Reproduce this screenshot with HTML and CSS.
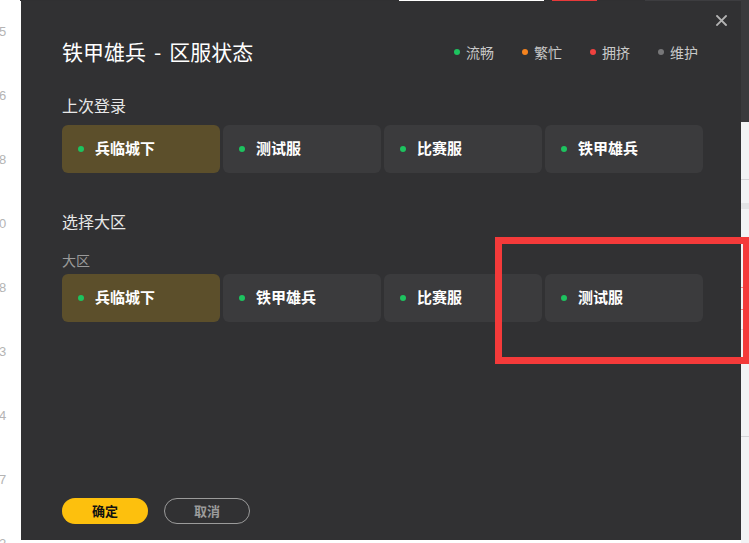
FILE: index.html
```html
<!DOCTYPE html>
<html lang="zh-CN">
<head>
<meta charset="utf-8">
<title>铁甲雄兵 - 区服状态</title>
<link rel="stylesheet" href="styles.css">
</head>
<body>
<div class="page">
  <div class="gutter">
    <span>5</span><span>6</span><span>8</span><span>0</span><span>8</span><span>3</span><span>4</span><span>7</span><span>2</span>
  </div>
  <div class="backdrop">
    <div class="topbar">
      <span class="seg seg-dark seg-w1"></span>
      <span class="seg seg-white seg-w2"></span>
      <span class="seg seg-dark seg-w3"></span>
      <span class="seg seg-red seg-w4"></span>
      <span class="seg seg-dark seg-w5"></span>
      <span class="seg seg-grey seg-fill"></span>
    </div>
  </div>
  <div class="side">
    <span class="side-dark"></span>
    <span class="side-light side-h1"></span>
    <span class="side-line"></span>
    <span class="side-light side-h2"></span>
    <span class="side-band"></span>
    <span class="side-light side-h3"></span>
    <span class="side-red"></span>
    <span class="side-light side-h4"></span>
    <span class="side-red"></span>
    <span class="side-light side-h5"></span>
    <span class="side-line"></span>
    <span class="side-light side-h6"></span>
    <span class="side-line"></span>
    <span class="side-light side-fill"></span>
  </div>
</div>

<div class="modal">
  <button class="close" aria-label="关闭">
    <svg width="11" height="11" viewBox="0 0 11 11"><path d="M1 1L10 10M10 1L1 10" stroke="#b4b4b4" stroke-width="1.8" stroke-linecap="square"/></svg>
  </button>
  <header class="modal-head">
    <h1>铁甲雄兵<span class="dash">-</span>区服状态</h1>
    <ul class="legend">
      <li><i class="dot dot-green"></i>流畅</li>
      <li><i class="dot dot-orange"></i>繁忙</li>
      <li><i class="dot dot-red"></i>拥挤</li>
      <li><i class="dot dot-grey"></i>维护</li>
    </ul>
  </header>

  <section class="group group-last">
    <h2>上次登录</h2>
    <div class="servers">
      <div class="server is-active"><i class="dot dot-green"></i>兵临城下</div>
      <div class="server"><i class="dot dot-green"></i>测试服</div>
      <div class="server"><i class="dot dot-green"></i>比赛服</div>
      <div class="server"><i class="dot dot-green"></i>铁甲雄兵</div>
    </div>
  </section>

  <section class="group group-region">
    <h2>选择大区</h2>
    <h3>大区</h3>
    <div class="servers">
      <div class="server is-active"><i class="dot dot-green"></i>兵临城下</div>
      <div class="server"><i class="dot dot-green"></i>铁甲雄兵</div>
      <div class="server"><i class="dot dot-green"></i>比赛服</div>
      <div class="server"><i class="dot dot-green"></i>测试服</div>
    </div>
  </section>

  <footer class="modal-foot">
    <button class="btn btn-primary">确定</button>
    <button class="btn btn-ghost">取消</button>
  </footer>
</div>

<div class="annotation"></div>
</body>
</html>
```

FILE: styles.css
```css
* { box-sizing: border-box; margin: 0; padding: 0; }

html, body {
  width: 749px;
  height: 543px;
  overflow: hidden;
}

body {
  background: #ffffff;
  font-family: "Noto Sans CJK SC", "Noto Sans", sans-serif;
  position: relative;
}

/* ---------- underlying page ---------- */
.page {
  display: flex;
  height: 543px;
  overflow: hidden;
}

.gutter {
  width: 21px;
  height: 543px;
  overflow: hidden;
  display: flex;
  flex-direction: column;
  font-family: "Liberation Sans", Arial, sans-serif;
  font-size: 13px;
  line-height: 64px;
  color: #b4b4b4;
  margin-left: -1px;
}
.gutter span { flex: none; height: 64px; }
.gutter span:last-child { height: 31px; line-height: 64px; }

.backdrop {
  flex: 1;
  background: #ffffff;
}

.topbar {
  display: flex;
  height: 1px;
}
.seg { display: block; height: 1px; }
.seg-dark { background: #303032; }
.seg-white { background: #ffffff; }
.seg-red { background: #e8393a; }
.seg-grey { background: #3d3d40; }
.seg-w1 { width: 379px; }
.seg-w2 { width: 145px; }
.seg-w3 { width: 8px; }
.seg-w4 { width: 45px; }
.seg-w5 { width: 48px; }
.seg-fill { flex: 1; }

.side {
  width: 8px;
  display: flex;
  flex-direction: column;
}
.side > span { display: block; }
.side-dark { height: 122px; background: #3a3a3d; }
.side-light { background: #f2f3f5; }
.side-h1 { height: 57px; }
.side-h2 { height: 23px; }
.side-h3 { height: 78px; }
.side-h4 { height: 21px; }
.side-h5 { height: 19px; }
.side-h6 { height: 106px; }
.side-fill { flex: 1; }
.side-line { height: 1px; background: #d4d5d8; }
.side-band { height: 6px; background: #e3e4e6; }
.side-red { height: 1px; background: #f08a8a; }

/* ---------- modal ---------- */
.modal {
  position: absolute;
  left: 21px;
  top: 1px;
  width: 720px;
  height: 539px;
  background: #313133;
  padding: 37px 38px 16px 41px;
  display: flex;
  flex-direction: column;
}

.close {
  position: absolute;
  top: 14px;
  right: 14px;
  width: 11px;
  height: 11px;
  border: 0;
  background: transparent;
  display: flex;
}

.modal-head {
  height: 28px;
  display: flex;
  align-items: center;
  justify-content: space-between;
}

.modal-head h1 {
  font-size: 21px;
  font-weight: 400;
  color: #ffffff;
  line-height: 28px;
  padding-bottom: 3px;
  white-space: nowrap;
}
.dash { padding: 0 8px; }

.legend {
  list-style: none;
  display: flex;
  gap: 28px;
  margin-right: 5px;
}
.legend li {
  display: flex;
  align-items: center;
  gap: 6px;
  font-size: 14px;
  line-height: 20px;
  color: #c9c9c9;
}

.dot {
  display: block;
  width: 6px;
  height: 6px;
  border-radius: 50%;
  flex: none;
}
.dot-green { background: #1dc35f; }
.dot-orange { background: #f5831f; }
.dot-red { background: #f0413f; }
.dot-grey { background: #777779; }

.group h2 {
  font-size: 16px;
  font-weight: 400;
  line-height: 22px;
  color: #e8e8e8;
}
.group-last { margin-top: 28px; }
.group-last h2 { margin-bottom: 9px; }

.group-region { margin-top: 37px; }
.group-region h3 {
  margin-top: 18px;
  margin-bottom: 4px;
  font-size: 14px;
  font-weight: 400;
  line-height: 20px;
  color: #9a9a9a;
}

.servers {
  display: grid;
  grid-template-columns: repeat(4, 158px);
  gap: 3px;
}

.server {
  height: 48px;
  border-radius: 6px;
  background: #3b3b3d;
  display: flex;
  align-items: center;
  padding-left: 16px;
  padding-bottom: 3px;
  gap: 11px;
  font-size: 15px;
  font-weight: 700;
  color: #ffffff;
}
.server .dot { margin-top: 3px; }
.server.is-active { background: #5c4f2b; }

.modal-foot {
  margin-top: auto;
  display: flex;
  gap: 16px;
}

.btn {
  width: 86px;
  height: 26px;
  border-radius: 13px;
  font-family: "Noto Sans CJK SC", sans-serif;
  font-size: 13px;
  font-weight: 700;
  display: flex;
  align-items: center;
  justify-content: center;
  padding-bottom: 1px;
}
.btn-primary {
  background: #fdc00d;
  border: 0;
  color: #111111;
}
.btn-ghost {
  background: transparent;
  border: 1px solid #9b9b9b;
  color: #9b9b9b;
}

/* ---------- red annotation box ---------- */
.annotation {
  position: absolute;
  left: 495px;
  top: 237px;
  width: 255px;
  height: 127px;
  border: 7px solid #f43a3a;
}
```
